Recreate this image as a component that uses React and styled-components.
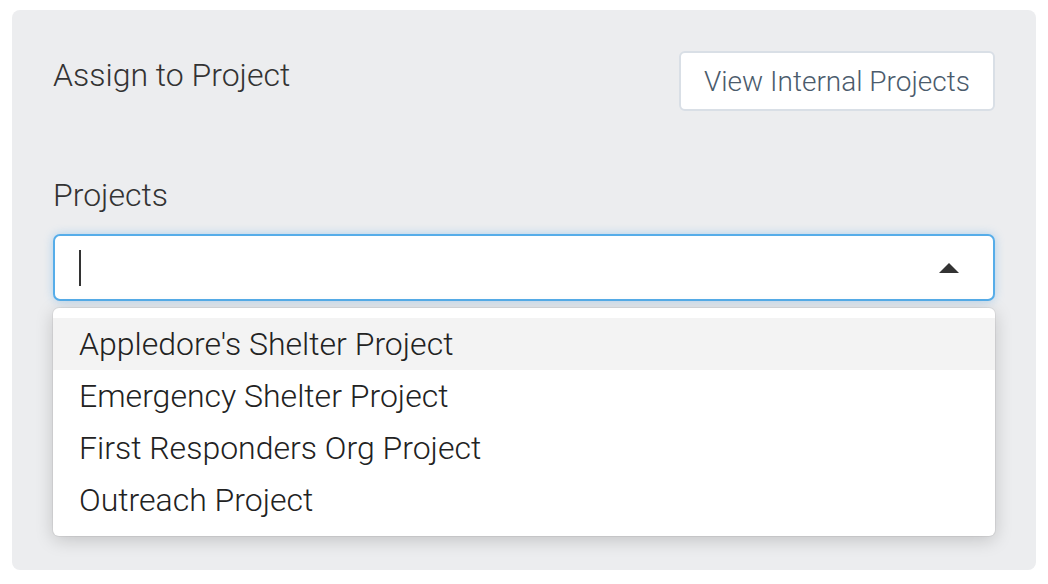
import React from 'react';
import styled, { createGlobalStyle } from 'styled-components';

const GlobalStyle = createGlobalStyle`
  body {
    margin: 0;
    background: #ffffff;
    font-family: Roboto, 'Liberation Sans', sans-serif;
  }
`;

const Page = styled.div`
  padding: 10px 12px 14px 12px;
`;

const Panel = styled.div`
  background: #ecedef;
  border-radius: 8px;
  height: 560px;
  box-sizing: border-box;
  padding: 40px 41px 0 41px;
`;

const Header = styled.div`
  display: flex;
  justify-content: space-between;
  align-items: flex-start;
`;

const Title = styled.div`
  font-size: 32px;
  line-height: 40px;
  font-weight: 300;
  color: #333;
  margin-top: 5px;
`;

const Button = styled.button`
  font-family: Roboto, 'Liberation Sans', sans-serif;
  font-size: 28px;
  font-weight: 300;
  color: #4b5b6c;
  background: #fff;
  border: 2px solid #d9dfe6;
  border-radius: 6px;
  height: 60px;
  width: 316px;
  margin-top: 1px;
  padding: 0;
`;

const Label = styled.div`
  font-size: 32px;
  line-height: 40px;
  font-weight: 300;
  color: #333;
  margin-top: 64px;
`;

const Field = styled.div`
  position: relative;
  margin-top: 19px;
`;

const Input = styled.div`
  height: 67px;
  box-sizing: border-box;
  background: #fff;
  border: 2px solid #56ade9;
  border-radius: 7px;
  box-shadow: 0 0 10px rgba(82, 168, 236, 0.4);
  display: flex;
  align-items: center;
  justify-content: space-between;
  padding: 0 34px 0 24px;
`;

const Caret = styled.span`
  width: 2px;
  height: 36px;
  background: #333;
`;

const Arrow = styled.span`
  width: 0;
  height: 0;
  border-left: 10px solid transparent;
  border-right: 10px solid transparent;
  border-bottom: 10px solid #333;
`;

const Menu = styled.ul`
  list-style: none;
  margin: 7px 0 0 0;
  padding: 10px 0;
  background: #fff;
  border-radius: 6px;
  box-shadow: 0 4px 18px rgba(0, 0, 0, 0.18), 0 0 0 1px rgba(0, 0, 0, 0.05);
`;

const Item = styled.li`
  height: 52px;
  line-height: 52px;
  padding: 0 26px;
  font-size: 32px;
  font-weight: 300;
  color: #222;
  background: ${p => (p.$active ? '#f3f3f3' : 'transparent')};
`;

const projects = [
  "Appledore's Shelter Project",
  'Emergency Shelter Project',
  'First Responders Org Project',
  'Outreach Project',
];

export default function App() {
  return (
    <>
      <GlobalStyle />
      <Page>
        <Panel>
          <Header>
            <Title>Assign to Project</Title>
            <Button>View Internal Projects</Button>
          </Header>
          <Label>Projects</Label>
          <Field>
            <Input>
              <Caret />
              <Arrow />
            </Input>
            <Menu>
              {projects.map((name, i) => (
                <Item key={name} $active={i === 0}>{name}</Item>
              ))}
            </Menu>
          </Field>
        </Panel>
      </Page>
    </>
  );
}
